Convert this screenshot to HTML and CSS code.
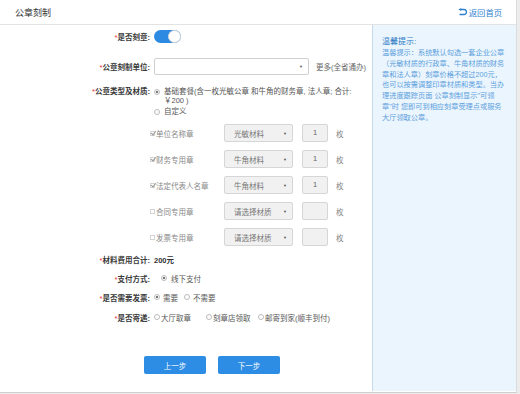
FILE: index.html
```html
<!DOCTYPE html>
<html lang="zh-CN">
<head>
    <meta charset="UTF-8">
    <title>公章刻制</title>
    <link rel="stylesheet" href="styles.css">
</head>
<body>
    <div class="page">
        <!-- Header -->
        <div class="header">
            <span class="title">公章刻制</span>
            <a class="back" href="#">
                <svg width="9" height="8" viewBox="0 0 9 8">
                    <path d="M3 1.5 H6 A2.5 2.5 0 0 1 6 6.5 H1.5" fill="none" stroke="#2f7fd0" stroke-width="1.3"/>
                    <path d="M0.5 1.5 L3.2 0 V3 Z" fill="#2f7fd0"/>
                </svg>返回首页</a>
        </div>

        <div class="main">
            <div class="form">
                <div class="row row-switch">
                    <label class="label"><i>*</i>是否刻章:</label>
                    <div class="field"><span class="switch"><span class="knob"></span></span></div>
                </div>

                <div class="row row-unit">
                    <label class="label"><i>*</i>公章刻制单位:</label>
                    <div class="field">
                        <div class="unit-select"><span class="arrow">▼</span></div>
                        <span class="more">更多(全省通办)</span>
                    </div>
                </div>

                <div class="row row-type">
                    <label class="label"><i>*</i>公章类型及材质:</label>
                    <div class="field">
                        <div class="pkg">
                            <span class="radio checked"></span>
                            <span class="pkg-text">基础套餐(含一枚光敏公章 和牛角的财务章, 法人章; 合计:<br>￥200 )</span>
                        </div>
                        <div class="pkg pkg-custom">
                            <span class="radio"></span>
                            <span class="pkg-text">自定义</span>
                        </div>

                        <div class="items" id="items"></div>
                    </div>
                </div>

                <div class="row row-small">
                    <label class="label"><i>*</i>材料费用合计:</label>
                    <div class="field"><b class="total">200元</b></div>
                </div>

                <div class="row row-small">
                    <label class="label"><i>*</i>支付方式:</label>
                    <div class="field pay">
                        <span class="opt"><span class="radio checked"></span>线下支付</span>
                    </div>
                </div>

                <div class="row row-small">
                    <label class="label"><i>*</i>是否需要发票:</label>
                    <div class="field">
                        <span class="opt"><span class="radio checked"></span>需要</span>
                        <span class="opt"><span class="radio"></span>不需要</span>
                    </div>
                </div>

                <div class="row row-small row-mail">
                    <label class="label"><i>*</i>是否寄递:</label>
                    <div class="field">
                        <span class="opt opt-hall"><span class="radio"></span>大厅取章</span>
                        <span class="opt opt-shop"><span class="radio"></span>刻章店领取</span>
                        <span class="opt"><span class="radio"></span>邮寄到家(顺丰到付)</span>
                    </div>
                </div>

                <div class="buttons">
                    <button class="btn">上一步</button>
                    <button class="btn">下一步</button>
                </div>
            </div>

            <!-- Tips -->
            <div class="aside">
                <div class="aside-title">温馨提示:</div>
                <p class="aside-text">温馨提示：系统默认勾选一套企业公章<br>（光敏材质的行政章、牛角材质的财务<br>章和法人章）刻章价格不超过200元，<br>也可以按需调整印章材质和类型。当办<br>理进度跟踪页面 公章刻制显示"可领<br>章"时 您即可到相应刻章受理点或服务<br>大厅领取公章。</p>
            </div>
        </div>
    </div>

    <script>
        // seal list
        const seals = [
            { name: '单位名称章', material: '光敏材料', count: '1', checked: true },
            { name: '财务专用章', material: '牛角材料', count: '1', checked: true },
            { name: '法定代表人名章', material: '牛角材料', count: '1', checked: true },
            { name: '合同专用章', material: '请选择材质', count: '', checked: false },
            { name: '发票专用章', material: '请选择材质', count: '', checked: false }
        ];

        const itemsBox = document.getElementById('items');
        seals.forEach((seal) => {
            itemsBox.innerHTML += `
                <div class="item">
                    <span class="item-name"><span class="check ${seal.checked ? 'on' : ''}"></span>${seal.name}</span>
                    <span class="select">${seal.material}<span class="arrow">▼</span></span>
                    <span class="num">${seal.count}</span>
                    <span class="unit">枚</span>
                </div>
            `;
        });
    </script>
</body>
</html>
```

FILE: styles.css
```css
body {
    margin: 0;
    font-family: "Liberation Sans", "Noto Sans CJK SC", sans-serif;
    font-size: 7.5px;
    color: #333;
    background: #ececec;
}

.page {
    width: 516px;
    height: 392px;
    background: #fff;
    border-right: 1px solid #dcdcdc;
    border-bottom: 1px solid #cfcfcf;
    display: flex;
    flex-direction: column;
}

/* Header */
.header {
    height: 24px;
    flex-shrink: 0;
    border-bottom: 1px solid #e3e3e3;
    display: flex;
    align-items: center;
    justify-content: space-between;
    padding: 0 14px 0 15px;
}

.title {
    font-size: 9px;
    color: #333;
}

.back {
    display: flex;
    align-items: center;
    gap: 2px;
    font-size: 8.3px;
    color: #2f7fd0;
    text-decoration: none;
}

.main {
    flex: 1;
    display: flex;
}

.form {
    flex: 1;
}

/* Form rows */
.row {
    display: flex;
    align-items: center;
}

.label {
    width: 150px;
    flex-shrink: 0;
    text-align: right;
    font-weight: bold;
    color: #3a3a3a;
}

.label i {
    font-style: normal;
    font-weight: normal;
    color: #e33;
}

.field {
    padding-left: 4px;
    display: flex;
    align-items: center;
}

.row-switch {
    margin-top: 5px;
    height: 13px;
}

.switch {
    position: relative;
    display: block;
    width: 27px;
    height: 13px;
    border-radius: 7px;
    background: #2d8ae2;
}

.knob {
    position: absolute;
    right: 0;
    top: 0;
    width: 11px;
    height: 11px;
    border-radius: 50%;
    background: #fff;
    border: 1px solid #d8d8d8;
}

.row-unit {
    margin-top: 15px;
    height: 17px;
}

.unit-select {
    width: 153px;
    height: 15px;
    border: 1px solid #cfcfcf;
    border-radius: 2px;
    display: flex;
    align-items: center;
    justify-content: flex-end;
}

.arrow {
    font-size: 4px;
    color: #555;
    margin-right: 5px;
}

.more {
    margin-left: 7px;
    color: #666;
}

/* Seal type */
.row-type {
    margin-top: 12px;
    align-items: flex-start;
}

.row-type .label {
    line-height: 9px;
}

.row-type .field {
    display: block;
    padding-left: 0;
}

.pkg {
    display: flex;
    align-items: flex-start;
    line-height: 9px;
    color: #555;
    padding-left: 4px;
}

.pkg .radio {
    margin: 1.5px 4px 0 0;
}

.pkg-custom {
    margin-top: 2px;
}

.radio {
    display: inline-block;
    box-sizing: border-box;
    width: 6px;
    height: 6px;
    border: 1px solid #bbb;
    border-radius: 50%;
    flex-shrink: 0;
}

.radio.checked {
    background: radial-gradient(circle, #777 0 1.3px, #fff 1.6px);
}

.items {
    margin-top: 8px;
}

.item {
    display: flex;
    align-items: center;
    height: 18px;
    margin-bottom: 8px;
    color: #888;
}

.item:last-child {
    margin-bottom: 0;
}

.item-name {
    width: 74px;
    display: flex;
    align-items: center;
}

.check {
    display: inline-block;
    box-sizing: border-box;
    width: 5px;
    height: 5px;
    border: 1px solid #d4d4d4;
    margin-right: 1px;
    position: relative;
}

.check.on::after {
    content: "";
    position: absolute;
    left: 0.5px;
    top: -1.5px;
    width: 2px;
    height: 4px;
    border: solid #999;
    border-width: 0 1px 1px 0;
    transform: rotate(40deg);
}

.select {
    box-sizing: border-box;
    width: 69px;
    height: 18px;
    border: 1px solid #d6d6d6;
    border-radius: 2px;
    background: #f1f1f1;
    display: flex;
    align-items: center;
    justify-content: space-between;
    padding-left: 9px;
    color: #777;
}

.num {
    box-sizing: border-box;
    width: 26px;
    height: 18px;
    margin-left: 9px;
    border: 1px solid #d6d6d6;
    border-radius: 2px;
    background: #f1f1f1;
    padding-left: 10px;
    line-height: 16px;
    color: #666;
}

.unit {
    margin-left: 8px;
}

/* Bottom rows */
.row-small {
    height: 12px;
    margin-top: 7px;
}

.total {
    color: #333;
}

.opt {
    display: inline-flex;
    align-items: center;
    color: #555;
    margin-right: 6px;
}

.opt .radio {
    margin-right: 3px;
}

.pay {
    padding-left: 11px;
}

.pay .radio {
    margin-right: 4px;
}

.row-mail {
    margin-top: 8px;
}

.row-mail .opt .radio {
    margin-right: 1px;
}

.opt-hall {
    width: 52px;
    margin-right: 0;
}

.opt-shop {
    width: 52px;
    margin-right: 0;
}

/* Buttons */
.buttons {
    margin-top: 33px;
    padding-left: 144px;
    display: flex;
    gap: 12px;
}

.btn {
    width: 62px;
    height: 18px;
    border: none;
    border-radius: 2px;
    background: #2d8ce3;
    color: #fff;
    font-family: inherit;
    font-size: 7.5px;
    padding: 0;
}

/* Tips panel */
.aside {
    width: 144px;
    box-sizing: border-box;
    background: #ebf5fe;
    border-left: 1px solid #c9d9ea;
    padding: 12px 0 0 9px;
    margin-bottom: 1px;
}

.aside-title {
    font-size: 8px;
    line-height: 10px;
    color: #2f7cc4;
}

.aside-text {
    margin: 1px 0 0 0;
    font-size: 7.2px;
    line-height: 10.8px;
    color: #5b9fdc;
    white-space: nowrap;
}
```
